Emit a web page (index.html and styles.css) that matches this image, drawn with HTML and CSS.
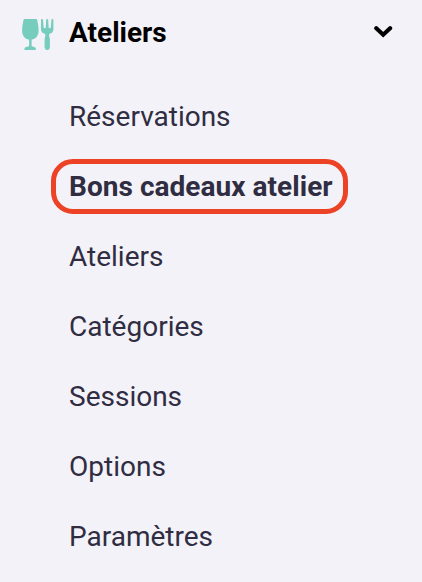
FILE: index.html
```html
<!DOCTYPE html>
<html lang="fr">
<head>
    <meta charset="UTF-8">
    <meta name="viewport" content="width=device-width, initial-scale=1.0">
    <title>Ateliers</title>
    <link rel="stylesheet" href="styles.css">
</head>
<body>
    <nav class="sidebar">
        <div class="menu-header">
            <svg class="menu-icon" viewBox="0 0 34 34">
                <path d="M3.500 1H15.200Q16 1 16.200 2Q17.700 8 17.600 13C17.500 18 14.500 21 10.600 21.700V28C11.500 29 15 28.700 15 31.200Q15 32 14 32H4.300Q3.300 32 3.300 31.200C3.300 28.700 7.200 29 8.100 28V21.700C4 21 1.200 18 1.100 13Q1 8 2.500 2Q2.700 1 3.500 1Z"/>
                <path d="M20 1.700Q20 1 20.800 1Q22 1 22 1.700L22.700 10H24.700L25.200 1.700Q25.300 1 26.200 1Q27.100 1 27.200 1.700L27.700 10H29.700L30.400 1.700Q30.400 1 31.500 1Q32.400 1 32.400 1.700V11.500Q32.200 15 28.200 16V18L28.900 21V29.500Q28.500 32 26.200 32Q23.900 32 23.600 29.500V21L24.300 18V16Q20.200 15 20 11.500Z"/>
            </svg>
            <span class="menu-title">Ateliers</span>
            <svg class="chevron" viewBox="0 0 20 14">
                <path d="M3.300 3.300L10.200 9.700L17.100 3.300"/>
            </svg>
        </div>
        <ul class="submenu">
            <li><a class="submenu-link">Réservations</a></li>
            <li><a class="submenu-link active">Bons cadeaux atelier</a></li>
            <li><a class="submenu-link">Ateliers</a></li>
            <li><a class="submenu-link">Catégories</a></li>
            <li><a class="submenu-link">Sessions</a></li>
            <li><a class="submenu-link">Options</a></li>
            <li><a class="submenu-link">Paramètres</a></li>
        </ul>
    </nav>
</body>
</html>
```
FILE: styles.css
```css
body {
    margin: 0;
    font-family: Roboto, sans-serif;
    font-size: 28px;
    background: #f3f2f8;
    color: #302d43;
    overflow: hidden;
}
.menu-header {
    display: flex;
    align-items: center;
    height: 64px;
    padding: 0 29px 0 21px;
}
.menu-icon {
    width: 34px;
    height: 34px;
    margin: 6px 14px 0 0;
    fill: #76cdbd;
}
.menu-title {
    flex: 1;
    font-weight: bold;
    color: #000;
}
.chevron {
    width: 20px;
    height: 14px;
    fill: none;
    stroke: #000;
    stroke-width: 4.2;
    stroke-linecap: round;
}
.submenu {
    list-style: none;
    margin: 0;
    padding: 17px 0 0 51px;
}
.submenu li {
    display: flex;
    align-items: center;
    height: 70px;
}
.submenu-link {
    box-sizing: border-box;
    height: 55px;
    padding: 0 10px 0 13px;
    border: 5px solid transparent;
    line-height: 46px;
    white-space: nowrap;
}
.active {
    border-color: #ec4226;
    border-radius: 22px;
    font-weight: bold;
    letter-spacing: 0.04px;
}
```
